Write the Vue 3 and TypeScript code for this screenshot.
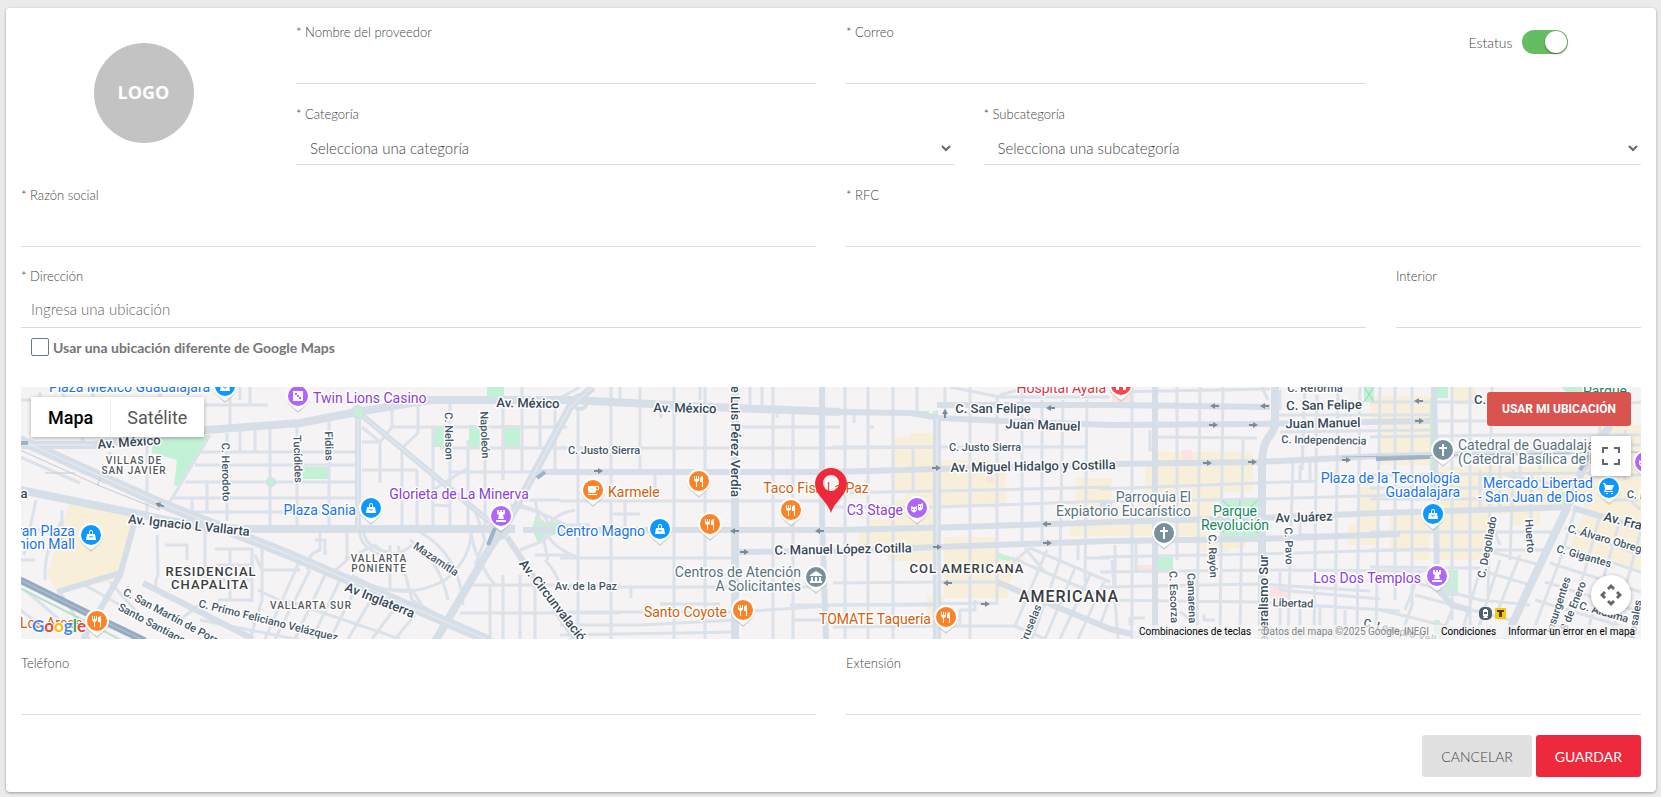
<script setup lang="ts">
import { ref } from 'vue'

type Kind = 'bag' | 'fork' | 'cup' | 'rook' | 'dice' | 'mask' | 'bank' | 'cross' | 'health' | 'cart'
interface Label {
  t: string
  x: number
  y: number
  k: string
  a?: 'start' | 'middle' | 'end'
  r?: number
}

const active = ref(true)
const customLocation = ref(false)
const mapType = ref<'Mapa' | 'Satélite'>('Mapa')

const sand: string[] = [
  'M70 500L133 513L132 528L120 573L110 582L58 592L47 575Z',
  'M893 437H910V433H932V437H940V490H893Z', 'M940 460H990V466H1006V505H940Z', 'M905 486H936V529H870V520H893V500H905Z',
  'M858 529H936V561H888V552H858Z', 'M944 537H996V558H1025L1008 585V598H944Z', 'M927 595H944V625H927Z',
  'M1076 478H1112V520H1206V536H1070V525H1100V512H1076Z', 'M1145 465H1156V452H1253V492H1222V522H1145Z', 'M1200 537H1246V548H1230V552H1198Z',
  'M1360 487H1380V545H1348V525H1360Z', 'M1370 396H1430V465H1380V425H1370Z', 'M1390 515H1430V560H1412V550H1390Z',
  'M1452 387H1475V405H1452Z', 'M1440 467H1590V480H1567L1560 508L1540 512V525H1510V514H1490V560H1440Z',
  'M1575 480H1641V570L1610 560L1570 545L1585 510Z', 'M1605 425H1641V480H1590Z',
]
const pink: string[] = ['M1182 450H1192V460H1182Z', 'M1137 565H1152V572H1137Z', 'M1270 587H1288V598H1270Z', 'M1112 387H1131V404H1112Z', 'M986 477H994V483H986Z']
const parks: string[] = [
  'M152 440L210 435L180 487L174 485L177 460L152 453Z', 'M303 467H329V479H303Z', 'M433 428H445V447H433Z', 'M469 425H485V447H469Z',
  'M504 425H520V447H504Z', 'M487 387H504V396H487Z', 'M536 514L546 523L560 521V534L548 536L538 543L532 530Z', 'M917 411H929V416H917Z', 'M933 411H938V416H933Z',
  'M997 552L1013 558L1010 561L998 559Z', 'M1222 500H1258V537H1222Z', 'M1157 557H1173V572H1157Z', 'M1364 387H1374V402H1364Z',
  'M1431 387H1448V398H1431Z', 'M1438 570H1458V596H1438Z', 'M1561 387H1590V396H1570Z', 'M1430 398H1434V490H1430Z', 'M1434 620H1440V639H1434Z',
  'M450 623L500 641H485L448 627Z', 'M1560 492H1574V504H1562Z',
]

const minor: string[] = [
  // Vallarta west blocks
  'M200 452H357M195 465H357M185 482H357M173 498H357M192 512H357M227 433V521M240 430V451M255 430V451M270 424V529M207 482V512M192 498V512M297 420V529M329 418V529M20 457L80 483M110 452V485',
  'M20 400H40V392M60 387L85 445M147 445V512M210 435L168 505M120 430V445M93 387V430M160 398V387M230 387V428M205 405H268M240 400V387M250 387V405',
  'M36 500L24 555M62 510V540M63 520Q44 545 45 580M20 560H35M25 590L60 620M20 610L50 632M85 585L160 628M110 582L135 610M60 592L90 640M20 530H42',
  'M157 535L158 575Q150 590 168 598M165 545H187V560M205 530V580M215 549H252V602M217 565H252M217 580H252M230 549V600M218 600H252M205 600L180 620M262 570V600L250 639M262 570H300M255 555L262 570V545M300 560L265 639',
  'M310 570L275 639M325 575L295 639M340 580L312 639M355 590L330 639M372 598L348 639M395 608L372 639M415 615L395 639M200 620L300 640M285 600L400 639M258 590L300 610',
  // Minerva fan
  'M380 440V483M402 448V525M417 470V525M433 425V525M450 400V525M468 440V525M485 410V525M503 395V480M390 427H483L540 427M362 442H380M440 448H570M362 470H417M450 472H538M362 427L380 442L392 427V405M402 448L418 433V400M433 505L450 506M433 490L452 478L468 468M540 398V448M555 400V472M522 387V472M540 427H567',
  'M347 530V560L330 575M320 530V550Q305 555 308 570M315 540H325V555M363 530Q366 550 390 552M375 545Q393 562 412 545M375 545L345 560M390 545V590M398 546L412 600L480 639M410 540Q440 560 448 600M420 532Q460 555 463 605M360 530Q358 545 380 555M352 575Q400 605 445 580Q470 560 471 533M375 590L412 590L425 610',
  'M471 533Q475 560 495 585M510 505Q540 510 565 525H590M523 500H560M535 555H570M470 585H620M460 613H620M490 585V639M503 575V639M520 575V639M535 585V639M548 560L535 500M475 510L485 540L475 565M520 550L545 540Q555 525 540 512L520 505M545 560Q555 570 560 585M575 510Q550 515 548 530T580 558',
  // Lafayette grid
  'M578 410V639M611 387V639M674 387V639M705 387V639M750 387V408M762 387V408M773 387V639M793 412V639M640 387V472M625 501V531M655 472V501M736 427H840M560 448H840L937 447M560 501H840M560 558H736M736 552H840M560 587H820M560 612H736L830 606M560 625H640L735 620M560 635L735 632M790 605H937M611 514H640M661 412V418M777 412V418M631 588V598M720 604H660M793 620H830M560 398L580 387M620 387V400M700 387V400',
  'M845 387V639M868 387V639M893 387V639M913 447V493M917 387V415M945 387V418M970 387V639M997 395V605M1022 387V545M1042 400V545M1063 400L1060 560M1087 400L1085 582M854 415V423M868 427H874M845 400V390M833 447H1086M833 493L937 491L1110 487M833 507H937L1110 501M833 583L937 582L996 582M833 605L996 603M833 627L937 626L1015 626M960 627V610H975V600',
  'M950 387L1000 397H1110M1000 395L1030 387M1030 548L1110 582M1012 558L1110 600M997 582L1110 629M1030 548L1010 565M1047 550L1015 626M1060 560L1032 639M1075 568L1045 639M1090 575L1060 639M1104 582L1078 639M1015 626L1045 639M1085 558H1110M1078 545V560M1025 548L1045 572',
  // Centro grid
  'M1132 387V639M1110 392L1270 389M1155 450H1150V430M1177 387V560M1200 387L1197 639M1223 387L1220 639M1243 438L1240 639M1268 400L1262 387M1293 460L1288 639M1317 395L1314 639M1338 387L1335 639M1360 387L1357 639M1380 387L1376 639M1153 437L1257 438M1100 489L1258 483L1316 481M1100 502L1258 499L1430 494M1100 557L1258 554L1430 549M1100 572L1270 570L1430 571M1100 587L1258 584L1370 591M1100 600L1258 602L1400 611M1115 545V585L1100 625M1136 543V570M1112 560L1118 639M1145 618H1130V625M1180 612L1195 622M1204 614V620H1215',
  'M1280 390V410M1305 387L1302 470M1275 415H1430M1280 432L1430 430M1310 460V480M1300 465V480M1280 572V590L1380 599M1280 600V639M1300 605V639M1320 607V639M1345 610V639M1300 520V535H1350',
  'M1395 387V600M1412 387V605M1452 387V620M1470 387V640M1492 387L1488 600M1513 470L1510 560M1532 475L1530 550M1370 402H1600M1370 421H1600M1370 437L1500 435H1641M1370 475L1590 473M1370 488H1575M1370 499H1565M1370 532H1560M1370 550H1548M1370 567L1480 568M1420 571L1405 610M1405 580L1480 600L1530 605M1415 595L1510 620M1380 610L1500 639M1412 605L1400 639M1452 610L1440 639M1480 570L1460 639M1500 560L1475 639M1520 555L1498 610M1485 550L1540 565M1480 570L1530 585M1490 520L1500 545M1505 475L1560 485M1480 470V512M1500 440V512M1520 440V490M1540 440V470',
  'M1575 510L1560 560L1530 639M1600 515L1585 570L1560 639M1620 520L1600 590L1585 639M1641 530L1622 600L1610 639M1565 528L1641 555M1558 545L1641 572M1550 563L1641 592M1545 582L1641 612M1535 600L1641 632M1600 425V460M1625 430V480M1590 475H1641M1605 500H1641M1641 510L1630 500M1590 445H1641M1595 407L1641 402',
]
const major: string[] = [
  'M560 472H833L937 469L1110 464L1258 462L1380 456L1570 452', 'M937 405H1110L1270 407', 'M840 412L910 413L940 418L1003 421L1110 425L1258 424L1430 421',
  'M523 530H736L840 530L960 527L1110 522L1257 518L1380 513L1570 507', 'M736 552L840 551L937 547L1110 541L1257 539L1400 534',
  'M358 412V529', 'M822 387V520L826 639', 'M1155 387V639', 'M137 513L120 575L83 639', 'M57 592L120 573', 'M143 583L253 639', 'M997 582L1110 629L1140 636',
  'M358 412L490 522', 'M507 537L575 639', 'M537 472H570', 'M1434 387L1437 570', 'M1100 505H1112', 'M1434 585L1452 605L1470 610', 'M1573 508L1641 528',
]
const avenue: string[] = [
  'M20 490L143 515Q200 529 253 529H515', 'M20 445H93L207 430L300 423L357 412L430 400H570L733 408L840 412', 'M735 387V639', 'M937 418V639',
  'M593 387L570 407L510 518L490 548L433 645', 'M1275 387V422Q1275 430 1268 438Q1262 448 1262 462V639', 'M1610 425L1583 468L1567 508L1527 592L1503 645',
]
const medians: string[] = [
  'M937 418V639', 'M593 387L570 407L510 518', 'M20 445H93', 'M358 412V529', 'M358 412L490 522', 'M20 440L160 503L240 535L290 555L430 615L490 641',
]
const arrows: number[][] = [
  [598, 471, 0], [735, 531, 180], [744, 552, 0], [820, 531, 180], [936, 468, 0], [945, 414, 270], [1051, 408, 180], [937, 547, 0],
  [1047, 524, 180], [1047, 543, 0], [948, 583, 180], [985, 604, 0], [1215, 406, 180], [1265, 406, 180], [1213, 425, 0], [1253, 425, 0],
  [1207, 463, 0], [1252, 462, 0], [1346, 460, 0], [1419, 401, 180], [1419, 421, 0], [160, 505, 200],
]

const labels: Label[] = [
  { t: 'Av. México', x: 129, y: 442, k: 'st', r: -4 },
  { t: 'Av. México', x: 528, y: 403, k: 'st', r: 1 },
  { t: 'Av. México', x: 685, y: 408, k: 'st', r: 1 },
  { t: 'Av. Ignacio L Vallarta', x: 189, y: 525, k: 'st', r: 6 },
  { t: 'a', x: 24, y: 493, k: 'st' },
  { t: 'Av Inglaterra', x: 380, y: 600, k: 'st', r: 22 },
  { t: 'Av. Circunvalación', x: 522, y: 561, k: 'st', r: 52, a: 'start' },
  { t: 'de Luis Pérez Verdía', x: 736, y: 497, k: 'st', r: 90, a: 'end' },
  { t: 'C. San Felipe', x: 993, y: 408, k: 'st' },
  { t: 'Juan Manuel', x: 1043, y: 425, k: 'st', r: 2 },
  { t: 'Av. Miguel Hidalgo y Costilla', x: 1033, y: 466, k: 'st', r: -1 },
  { t: 'C. Manuel López Cotilla', x: 843, y: 549, k: 'st', r: -1 },
  { t: 'C. San Felipe', x: 1324, y: 405, k: 'st', r: -1 },
  { t: 'Juan Manuel', x: 1323, y: 423, k: 'st', r: -1 },
  { t: 'Av Juárez', x: 1304, y: 517, k: 'st', r: -2 },
  { t: 'C.', x: 1480, y: 399, k: 'st' },
  { t: 'Federalismo Sur', x: 1263, y: 555, k: 'st', r: -90, a: 'end' },
  { t: 'Av. Francisco', x: 1604, y: 516, k: 'st', r: 14, a: 'start' },
  { t: 'C. Justo Sierra', x: 604, y: 450, k: 'sm' },
  { t: 'C. Justo Sierra', x: 985, y: 447, k: 'sm' },
  { t: 'C. Independencia', x: 1324, y: 440, k: 'sm', r: 1 },
  { t: 'C. Reforma', x: 1315, y: 388, k: 'sm' },
  { t: 'Libertad', x: 1293, y: 603, k: 'sm', r: 2 },
  { t: 'C. Herodoto', x: 226, y: 472, k: 'sm', r: 89 },
  { t: 'Tucídides', x: 298, y: 459, k: 'sm', r: 88 },
  { t: 'Fidias', x: 329, y: 446, k: 'sm', r: 88 },
  { t: 'C. Nelson', x: 449, y: 436, k: 'sm', r: 89 },
  { t: 'Napoleón', x: 485, y: 435, k: 'sm', r: 88 },
  { t: 'Mazamitla', x: 436, y: 559, k: 'sm', r: 34 },
  { t: 'Av. de la Paz', x: 586, y: 586, k: 'sm' },
  { t: 'C. San Martín de Porres', x: 124, y: 591, k: 'sm', r: 28, a: 'start' },
  { t: 'Santo Santiago', x: 119, y: 606, k: 'sm', r: 28, a: 'start' },
  { t: 'C. Primo Feliciano Velázquez', x: 199, y: 603, k: 'sm', r: 14, a: 'start' },
  { t: 'C. Escorza', x: 1174, y: 597, k: 'sm', r: 88 },
  { t: 'Camarena', x: 1192, y: 598, k: 'sm', r: 88 },
  { t: 'C. Rayón', x: 1213, y: 556, k: 'sm', r: 88 },
  { t: 'C. Pavo', x: 1289, y: 546, k: 'sm', r: 88 },
  { t: 'C. Degollado', x: 1487, y: 547, k: 'sm', r: -79 },
  { t: 'Huerto', x: 1530, y: 536, k: 'sm', r: 86 },
  { t: 'C. Álvaro Obregón', x: 1568, y: 528, k: 'sm', r: 16, a: 'start' },
  { t: 'C. Gigantes', x: 1584, y: 556, k: 'sm', r: 16 },
  { t: 'Insurgentes', x: 1558, y: 605, k: 'sm', r: -72 },
  { t: '8 de Enero', x: 1573, y: 606, k: 'sm', r: -68 },
  { t: 'C. Aldama', x: 1604, y: 612, k: 'sm', r: 16 },
  { t: 'Antonio Rosales', x: 1638, y: 600, k: 'sm', r: -80, a: 'end' },
  { t: 'C. Leandro Valle', x: 1364, y: 622, k: 'sm', r: 14, a: 'start' },
  { t: 'C. I', x: 1627, y: 494, k: 'sm', r: 6, a: 'start' },
  { t: 'Bruselas', x: 1030, y: 625, k: 'sm', r: -68 },
  { t: 'VILLAS DE', x: 134, y: 460, k: 'hood' },
  { t: 'SAN JAVIER', x: 134, y: 470, k: 'hood' },
  { t: 'VALLARTA', x: 379, y: 558, k: 'hood' },
  { t: 'PONIENTE', x: 379, y: 568, k: 'hood' },
  { t: 'VALLARTA SUR', x: 311, y: 605, k: 'hood' },
  { t: 'RESIDENCIAL', x: 211, y: 571, k: 'area' },
  { t: 'CHAPALITA', x: 210, y: 584, k: 'area' },
  { t: 'COL AMERICANA', x: 967, y: 568, k: 'area' },
  { t: 'AMERICANA', x: 1069, y: 596, k: 'city' },
  { t: 'Plaza México Guadalajara', x: 210, y: 387, k: 'blue', a: 'end' },
  { t: 'Plaza Sania', x: 356, y: 510, k: 'blue', a: 'end' },
  { t: 'Gran Plaza', x: 75, y: 531, k: 'blue', a: 'end' },
  { t: 'Fashion Mall', x: 75, y: 544, k: 'blue', a: 'end' },
  { t: 'Centro Magno', x: 645, y: 531, k: 'blue', a: 'end' },
  { t: 'Plaza de la Tecnología', x: 1460, y: 478, k: 'blue', a: 'end' },
  { t: 'Guadalajara', x: 1460, y: 492, k: 'blue', a: 'end' },
  { t: 'Mercado Libertad', x: 1593, y: 483, k: 'blue', a: 'end' },
  { t: '- San Juan de Dios', x: 1593, y: 497, k: 'blue', a: 'end' },
  { t: 'Twin Lions Casino', x: 313, y: 398, k: 'purple', a: 'start' },
  { t: 'Glorieta de La Minerva', x: 459, y: 494, k: 'purple' },
  { t: 'C3 Stage', x: 903, y: 510, k: 'purple', a: 'end' },
  { t: 'Los Dos Templos', x: 1421, y: 578, k: 'purple', a: 'end' },
  { t: 'Karmele', x: 608, y: 492, k: 'orange', a: 'start' },
  { t: 'Taco Fish La Paz', x: 816, y: 488, k: 'orange' },
  { t: 'Santo Coyote', x: 727, y: 612, k: 'orange', a: 'end' },
  { t: 'TOMATE Taquería', x: 931, y: 619, k: 'orange', a: 'end' },
  { t: 'Los Arcos', x: 20, y: 623, k: 'orange', a: 'start' },
  { t: 'Centros de Atención', x: 801, y: 572, k: 'slate', a: 'end' },
  { t: 'A Solicitantes', x: 801, y: 586, k: 'slate', a: 'end' },
  { t: 'Parroquia El', x: 1191, y: 497, k: 'slate', a: 'end' },
  { t: 'Expiatorio Eucarístico', x: 1191, y: 511, k: 'slate', a: 'end' },
  { t: 'Catedral de Guadalajara', x: 1458, y: 445, k: 'slate', a: 'start' },
  { t: '(Catedral Basílica de la', x: 1458, y: 459, k: 'slate', a: 'start' },
  { t: 'Hospital Ayala', x: 1106, y: 388, k: 'red', a: 'end' },
  { t: 'Parque', x: 1235, y: 511, k: 'green' },
  { t: 'Revolución', x: 1235, y: 525, k: 'green' },
  { t: 'Parque', x: 1605, y: 391, k: 'green' },
]

const tint: Record<Kind, string> = {
  bag: '#0b98ff', cart: '#0b98ff', fork: '#fd8326', cup: '#fd8326', rook: '#b265fb', dice: '#b265fb', mask: '#b265fb', bank: '#78909c', cross: '#78909c', health: '#fb4553',
}
const glyph: Record<Kind, string> = {
  bag: 'M-4 -1H4L5 5H-5ZM-2 -1V-3Q-2 -5 0 -5T2 -3V-1H1V-3Q1 -4 0 -4T-1 -3V-1ZM-2 1Q0 4 2 1L1 1Q0 2 -1 1Z',
  cart: 'M-6 -5H-4L-3 -3H5L3 2H-3L-4 3H4V4H-5L-4 1L-5 -4H-6ZM-3 5H-1V6H-3ZM2 5H4V6H2Z',
  fork: 'M-5 -5H-4V-2H-3V-5H-2V-2H-1V-5H0V-1Q0 0 -2 1V6H-3V1Q-5 0 -5 -1ZM4 -5V6H3V1H1V-2Q1 -5 4 -5Z',
  cup: 'M-5 -4H6V0H3V1Q3 3 1 3H-3Q-5 3 -5 1ZM3 -3V-1H5V-3ZM-5 4H4V5H-5Z',
  rook: 'M-4 -6H-2V-4H-1V-6H1V-4H2V-6H4V-2L2 -1L3 3H-3L-2 -1L-4 -2ZM-5 4H5V6H-5Z',
  dice: 'M-5 -5H5V5H-5ZM-3 -3V-1H-1V-3ZM1 1V3H3V1ZM-1 -1V1H1V-1Z',
  mask: 'M-6 -2Q-3 0 0 -2V2Q-3 7 -6 2ZM1 -4Q3 -3 6 -5V0Q4 4 1 2ZM-5 1H-4V2H-5ZM-2 1H-1V2H-2ZM2 -2H3V-1H2ZM4 -2H5V-1H4Z',
  bank: 'M-6 -2L0 -6L6 -2V-1H-6ZM-5 0H-3V4H-5ZM-1 0H1V4H-1ZM3 0H5V4H3ZM-6 4H6V6H-6Z',
  cross: 'M-1 -6H1V-3H4V-1H1V6H-1V-1H-4V-3H-1Z',
  health: 'M-5 -5H-2V-1H2V-5H5V5H2V2H-2V5H-5Z',
}
const pins: { x: number; y: number; k: Kind }[] = [
  { x: 225, y: 386, k: 'bag' }, { x: 91, y: 535, k: 'bag' }, { x: 371, y: 508, k: 'bag' }, { x: 660, y: 529, k: 'bag' }, { x: 1433, y: 514, k: 'bag' },
  { x: 298, y: 396, k: 'dice' }, { x: 501, y: 516, k: 'rook' }, { x: 1437, y: 576, k: 'rook' }, { x: 593, y: 490, k: 'cup' },
  { x: 699, y: 481, k: 'fork' }, { x: 710, y: 524, k: 'fork' }, { x: 791, y: 510, k: 'fork' }, { x: 743, y: 610, k: 'fork' }, { x: 946, y: 617, k: 'fork' },
  { x: 97, y: 621, k: 'fork' }, { x: 917, y: 508, k: 'mask' }, { x: 816, y: 577, k: 'bank' }, { x: 1164, y: 533, k: 'cross' }, { x: 1443, y: 450, k: 'cross' },
  { x: 1121, y: 385, k: 'health' }, { x: 1609, y: 488, k: 'cart' }, { x: 1645, y: 462, k: 'mask' },
]
</script>

<template>
  <main class="page">
    <form class="card" @submit.prevent>
      <div class="grid head">
        <div class="logo-cell"><div class="logo">LOGO</div></div>
        <div class="head-fields">
          <div class="grid-10">
            <div class="field span-4">
              <label for="nombre">* Nombre del proveedor</label>
              <input id="nombre" type="text" />
            </div>
            <div class="field span-4">
              <label for="correo">* Correo</label>
              <input id="correo" type="email" />
            </div>
            <div class="status">
              <label for="estatus">Estatus</label>
              <input id="estatus" v-model="active" class="switch" type="checkbox" role="switch" />
            </div>
          </div>
          <div class="halves">
            <div class="field">
              <label for="categoria">* Categoría</label>
              <div class="select">
                <select id="categoria"><option>Selecciona una categoría</option></select>
                <svg viewBox="0 0 10 8" aria-hidden="true"><path d="M1 2L5 6L9 2" /></svg>
              </div>
            </div>
            <div class="field">
              <label for="subcategoria">* Subcategoría</label>
              <div class="select">
                <select id="subcategoria"><option>Selecciona una subcategoría</option></select>
                <svg viewBox="0 0 10 8" aria-hidden="true"><path d="M1 2L5 6L9 2" /></svg>
              </div>
            </div>
          </div>
        </div>
      </div>

      <div class="halves">
        <div class="field">
          <label for="razon">* Razón social</label>
          <input id="razon" type="text" />
        </div>
        <div class="field">
          <label for="rfc">* RFC</label>
          <input id="rfc" type="text" />
        </div>
      </div>

      <div class="grid address">
        <div class="field span-10">
          <label for="direccion">* Dirección</label>
          <input id="direccion" type="text" placeholder="Ingresa una ubicación" />
        </div>
        <div class="field span-2">
          <label for="interior">Interior</label>
          <input id="interior" type="text" />
        </div>
      </div>

      <div class="check">
        <input id="otra" v-model="customLocation" type="checkbox" />
        <label for="otra">Usar una ubicación diferente de Google Maps</label>
      </div>

      <section class="map" aria-label="Mapa">
        <svg class="canvas" viewBox="21 387 1620 252" preserveAspectRatio="xMidYMid slice">
          <rect x="21" y="387" width="1620" height="252" fill="#f5f3f4" />
          <path v-for="d in sand" :key="d" :d="d" fill="#f8efdb" />
          <path v-for="d in pink" :key="d" :d="d" fill="#fbe3e1" />
          <path v-for="d in parks" :key="d" :d="d" fill="#c3f1d5" />
          <g class="roads">
            <path v-for="d in minor" :key="d" :d="d" stroke-width="3" stroke="#dbe2e9" />
            <path v-for="d in major" :key="d" :d="d" stroke-width="6" />
            <path d="M20 440L160 503L240 535L290 555L430 615L490 641" stroke-width="10" />
            <path v-for="d in avenue" :key="d" :d="d" stroke-width="8" />
            <circle cx="499" cy="529" r="9" stroke-width="4" />
            <circle cx="580" cy="402" r="7" stroke-width="4" />
            <path class="median" v-for="d in medians" :key="d" :d="d" />
            <path d="M20 450L100 486L160 510M45 473H75M100 478L98 486" stroke="#c6cbd0" stroke-width="1" />
            <path d="M20 588L87 622L130 645" stroke="#b9e3c8" stroke-width="2" />
            <path d="M20 580L87 613L145 641" stroke="#96abc2" stroke-width="7" />
            <path d="M20 580L87 613L145 641" stroke="#b5c5d6" stroke-width="1" />
            <path d="M495 528L488 545M537 478L545 472M20 443H28M1376 459L1430 457M1580 470L1590 455" stroke="#9fb2c6" stroke-width="4" />
            <path d="M1342 457L1641 452" stroke="#a9b9c9" stroke-width="1" />
          </g>
          <circle cx="358" cy="412" r="6" fill="#c3f1d5" stroke="#d6dfe6" stroke-width="2" />
          <circle cx="271" cy="482" r="4" fill="#c3f1d5" stroke="#d6dfe6" stroke-width="2" />
          <path d="M1222 500L1258 533M1258 500L1222 533M1240 500V512M1364 387L1374 402M1374 387L1364 402" stroke="#94d9b2" fill="none" />
          <path v-for="(a, i) in arrows" :key="i" :transform="`translate(${a[0]} ${a[1]}) rotate(${a[2]})`" d="M-4 -1H0V-3L5 0L0 3V1H-4Z" fill="#7d8b99" />
          <text
            v-for="(l, i) in labels"
            :key="i"
            :class="l.k"
            :text-anchor="l.a ?? 'middle'"
            :transform="`translate(${l.x} ${l.y}) rotate(${l.r ?? 0})`"
            dy="0.35em"
          >{{ l.t }}</text>
          <g v-for="(p, i) in pins" :key="i" :transform="`translate(${p.x} ${p.y})`">
            <path d="M0 17L-9 9A12 12 0 1 1 9 9Z" fill="#8a8f94" opacity=".35" />
            <path d="M0 15L-8 9A12 12 0 1 1 8 9Z" fill="#fff" />
            <circle r="10" :fill="tint[p.k]" />
            <path :d="glyph[p.k]" fill="#fff" fill-rule="evenodd" />
          </g>
          <rect x="1479" y="607" width="13" height="13" rx="5" fill="#4a6070" />
          <path d="M1484 609H1487V610H1488V616H1487L1488 618H1483L1484 616H1483V610H1484ZM1484 612V614H1487V612Z" fill="#fff" fill-rule="evenodd" />
          <rect x="1495" y="608" width="11" height="11" rx="1" fill="#fcc70a" />
          <path d="M1497 610H1504V612H1502V617H1499V612H1497Z" fill="#4d4017" />
          <path d="M831 513C828 502 815 495 815 484A16 16 0 0 1 847 484C847 495 834 502 831 513ZM831 475A8 8 0 0 0 831 491A8 8 0 0 0 831 475Z" fill="#ee293b" fill-rule="evenodd" />
        </svg>

        <div class="types">
          <button v-for="m in (['Mapa', 'Satélite'] as const)" :key="m" type="button" :class="{ on: mapType === m }" @click="mapType = m">{{ m }}</button>
        </div>
        <button type="button" class="locate">USAR MI UBICACIÓN</button>
        <button type="button" class="tool full" aria-label="Pantalla completa">
          <svg viewBox="0 0 18 18"><path d="M0 0H6V2H2V6H0ZM12 0H18V6H16V2H12ZM0 12H2V16H6V18H0ZM16 12H18V18H12V16H16Z" /></svg>
        </button>
        <button type="button" class="tool pan" aria-label="Controles de la cámara">
          <svg viewBox="0 0 22 22"><path d="M11 0L15 4L13 6L11 4L9 6L7 4ZM11 22L7 18L9 16L11 18L13 16L15 18ZM0 11L4 7L6 9L4 11L6 13L4 15ZM22 11L18 15L16 13L18 11L16 9L18 7Z" /></svg>
        </button>
        <a class="google" href="#" aria-label="Google"><i class="b">G</i><i class="r">o</i><i class="y">o</i><i class="b">g</i><i class="g">l</i><i class="r">e</i></a>
        <div class="legal">
          <button type="button">Combinaciones de teclas</button>
          <span>Datos del mapa ©2025 Google, INEGI</span>
          <a href="#">Condiciones</a>
          <a href="#">Informar un error en el mapa</a>
        </div>
      </section>

      <div class="halves">
        <div class="field">
          <label for="telefono">Teléfono</label>
          <input id="telefono" type="tel" />
        </div>
        <div class="field">
          <label for="extension">Extensión</label>
          <input id="extension" type="text" />
        </div>
      </div>

      <footer class="actions">
        <button type="button" class="cancel">CANCELAR</button>
        <button type="submit" class="save">GUARDAR</button>
      </footer>
    </form>
  </main>
</template>

<style>
body {
  margin: 0;
  background: #ebebeb;
}
</style>

<style scoped>
.page,
.page * {
  box-sizing: border-box;
}
.page {
  padding: 8px 5px 5px 6px;
  font-family: Lato, 'Liberation Sans', sans-serif;
  font-weight: 300;
  color: #444;
}
.card {
  padding: 15px;
  background: #fff;
  border-radius: 4px;
  box-shadow: 0 1px 3px rgba(0, 0, 0, 0.35);
}
button,
input,
select {
  font: inherit;
  color: inherit;
  margin: 0;
}
button {
  border: 0;
  cursor: pointer;
}
.grid,
.grid-10,
.halves {
  display: grid;
  gap: 21px 30px;
}
.grid {
  grid-template-columns: repeat(12, minmax(0, 1fr));
}
.grid-10 {
  grid-template-columns: repeat(10, minmax(0, 1fr));
}
.halves {
  grid-template-columns: repeat(2, minmax(0, 1fr));
}
.head {
  margin-bottom: 21px;
}
.logo-cell {
  grid-column: span 2;
  display: flex;
  justify-content: center;
  align-items: flex-start;
  padding-top: 20px;
}
.logo {
  width: 100px;
  height: 100px;
  border-radius: 50%;
  background: #c3c3c3;
  color: #fff;
  font-family: 'Open Sans', sans-serif;
  font-size: 18px;
  font-weight: 700;
  line-height: 98px;
  text-align: center;
}
.head-fields {
  grid-column: span 10;
  display: grid;
  gap: 21px;
}
.span-4 {
  grid-column: span 4;
}
.span-10 {
  grid-column: span 10;
}
.span-2 {
  grid-column: span 2;
}
.field > label {
  display: block;
  font-size: 13px;
  line-height: 18px;
}
.field input,
.field select {
  display: block;
  width: 100%;
  height: 43px;
  padding: 6px 10px 0;
  border: 0;
  border-bottom: 1px solid #dcdcdc;
  border-radius: 0;
  background: transparent;
  font-size: 15px;
  outline: none;
}
.field select {
  appearance: none;
  height: 42px;
  padding: 8px 14px 0;
}
.field input::placeholder {
  color: #666;
  opacity: 1;
}
.select {
  display: grid;
  align-items: center;
}
.select > * {
  grid-area: 1 / 1;
}
.select svg {
  justify-self: end;
  width: 10px;
  height: 8px;
  margin: 8px 3px 0 0;
  fill: none;
  stroke: #666;
  stroke-width: 2;
  pointer-events: none;
}
.status {
  grid-column: span 2;
  display: flex;
  justify-content: center;
  align-items: center;
  gap: 10px;
  height: 24px;
  margin-top: 7px;
  font-size: 14px;
}
.switch {
  appearance: none;
  display: flex;
  width: 46px;
  height: 24px;
  padding: 1px;
  border-radius: 12px;
  background: #bbb;
}
.switch::before {
  content: '';
  width: 22px;
  height: 22px;
  border-radius: 50%;
  background: #fff;
  box-shadow: 0 1px 2px rgba(0, 0, 0, 0.4);
}
.switch:checked {
  justify-content: flex-end;
  background: #64bd63;
}
.address {
  margin-top: 20px;
}
.check {
  display: flex;
  align-items: center;
  gap: 4px;
  margin: 10px 10px 31px;
  height: 18px;
  font-size: 14px;
  font-weight: 700;
  color: #757575;
}
.check input {
  appearance: none;
  width: 18px;
  height: 18px;
  border: 1px solid #607d8b;
  border-radius: 2px;
}
.check input:checked {
  background: #607d8b;
}
.map {
  position: relative;
  height: 252px;
  margin-bottom: 15px;
  overflow: hidden;
  font-family: Roboto, Arial, sans-serif;
  font-weight: 400;
}
.canvas {
  display: block;
  width: 100%;
  height: 100%;
}
.roads {
  fill: none;
  stroke: #d6dfe7;
  stroke-linejoin: round;
}
.roads .median {
  stroke: #e8edf1;
  stroke-width: 1;
}
.canvas text {
  font-size: 14px;
  fill: #36485a;
  stroke: #fff;
  stroke-width: 3px;
  stroke-linejoin: round;
  paint-order: stroke;
}
.canvas .st {
  font-size: 13px;
  font-weight: 500;
}
.canvas .sm {
  font-size: 11px;
  font-weight: 500;
  fill: #44576a;
}
.canvas .hood,
.canvas .area,
.canvas .city {
  fill: #55585c;
  font-size: 10px;
  font-weight: 500;
  letter-spacing: 1px;
}
.canvas .area {
  font-size: 13px;
  fill: #3a3d41;
}
.canvas .city {
  font-size: 16px;
  fill: #3a3d41;
}
.canvas .blue {
  fill: #1a73e8;
}
.canvas .purple {
  fill: #8a40dc;
}
.canvas .orange {
  fill: #d5600a;
}
.canvas .slate {
  fill: #587280;
}
.canvas .green {
  fill: #15895c;
}
.canvas .red {
  fill: #dc3545;
}
.types {
  position: absolute;
  top: 10px;
  left: 10px;
  display: flex;
  border-radius: 2px;
  box-shadow: 0 1px 4px rgba(0, 0, 0, 0.3);
}
.types button {
  height: 40px;
  padding: 0 17px;
  background: #fff;
  color: #565656;
  font-size: 18px;
}
.types button + button {
  padding-left: 16px;
  border-left: 1px solid #eee;
}
.types .on {
  color: #000;
  font-weight: 500;
}
.locate {
  position: absolute;
  top: 5px;
  right: 10px;
  height: 34px;
  padding: 0 15px;
  border-radius: 3px;
  background: #d9534f;
  color: #fff;
  font-size: 12px;
  font-weight: 700;
}
.tool {
  position: absolute;
  right: 10px;
  display: grid;
  place-items: center;
  width: 40px;
  height: 40px;
  padding: 0;
  border-radius: 2px;
  background: #fff;
  box-shadow: 0 1px 4px rgba(0, 0, 0, 0.3);
}
.tool svg {
  width: 18px;
  fill: #666;
}
.full {
  top: 49px;
}
.pan {
  top: 188px;
  border-radius: 50%;
}
.pan svg {
  width: 22px;
}
.google {
  position: absolute;
  left: 11px;
  bottom: 2px;
  font-family: Lato, sans-serif;
  font-size: 17px;
  font-weight: 700;
  line-height: 22px;
  text-decoration: none;
  text-shadow: 1px 0 #fff, -1px 0 #fff, 0 1px #fff, 0 -1px #fff;
}
.google i {
  font-style: normal;
}
.b {
  color: #4285f4;
}
.r {
  color: #ea4335;
}
.y {
  color: #fbbc04;
}
.g {
  color: #34a853;
}
.legal {
  position: absolute;
  right: 0;
  bottom: 0;
  display: flex;
  height: 14px;
  line-height: 14px;
  font-size: 10px;
  color: #000;
}
.legal > * {
  padding: 0 6px;
  background: rgba(245, 245, 245, 0.7);
  color: inherit;
  text-decoration: none;
}
.legal span {
  color: #858585;
}
.actions {
  display: flex;
  justify-content: flex-end;
  gap: 4px;
  margin-top: 20px;
}
.actions button {
  height: 42px;
  padding: 0 19px;
  border-radius: 3px;
  font-size: 14px;
}
.cancel {
  background: #e1e1e1;
}
.actions .save {
  background: #ee293b;
  color: #fff;
  font-weight: 400;
}
</style>
